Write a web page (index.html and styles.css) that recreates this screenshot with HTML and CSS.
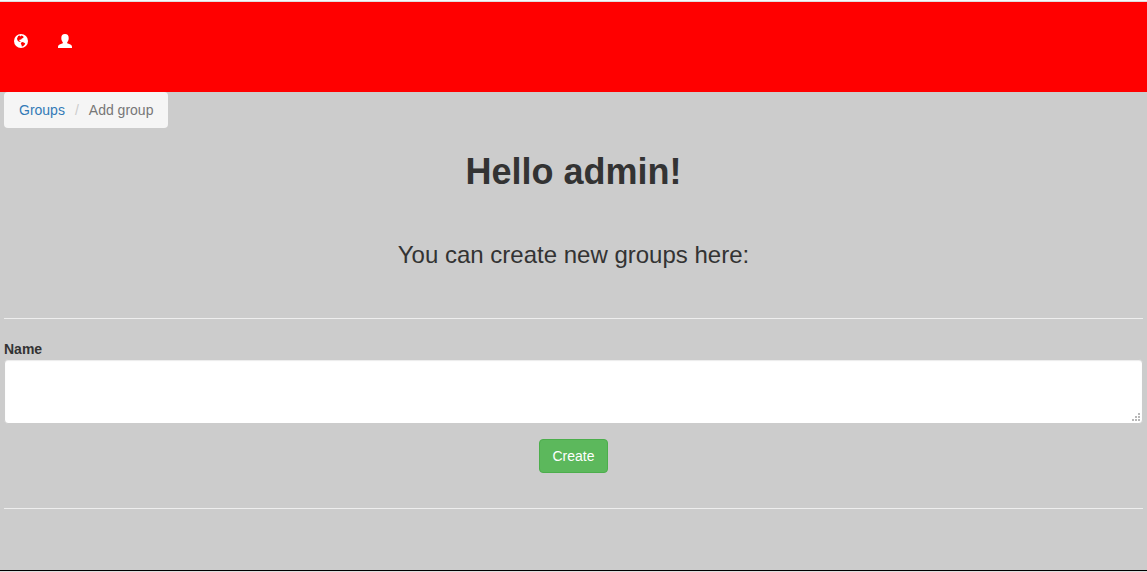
FILE: index.html
```html
<!DOCTYPE html>
<html lang="en">
<head>
<meta charset="utf-8">
<meta name="viewport" content="width=device-width, initial-scale=1">
<title>Add group</title>
<link rel="stylesheet" href="styles.css">
</head>
<body>
<header class="page-header">
  <nav class="toolbar" aria-label="Main">
    <a class="toolbar-link" href="#" aria-label="Groups">
      <svg class="icon" viewBox="0 0 14 14" aria-hidden="true">
        <circle cx="7" cy="7" r="7" fill="#fff"/>
        <path fill="#f00" d="M4.2 2 5.6 1.4 6.4 2.4 7.4 1.6 9.2 2.2 9.6 3.4 8.6 4.2 7.8 4.6 7 5.8 6 5.4 5.2 6.2 5.6 7 6.8 7.4 6.2 8 4.6 7.4 3.4 6.2 3 4.4ZM7.2 8.4 8.6 8 10.2 8.8 11.2 9.4 10.6 10.8 9 12.2 7.8 12.4 7.6 11 6.8 9.8Z"/>
      </svg>
    </a>
    <a class="toolbar-link" href="#" aria-label="Account">
      <svg class="icon" viewBox="0 0 14 14" aria-hidden="true">
        <path fill="#fff" d="M7 0C9.6 0 10.7 1.5 10.7 3.9 10.7 6 10 7.2 9.2 8.2V9.2L12.4 10.6C13.5 11.1 14 11.9 14 13V14H0V13C0 11.9.5 11.1 1.6 10.6L4.8 9.2V8.2C4 7.2 3.3 6 3.3 3.9 3.3 1.5 4.4 0 7 0Z"/>
      </svg>
    </a>
  </nav>
</header>
<main class="content">
  <nav aria-label="Breadcrumb">
    <ol class="breadcrumb">
      <li><a href="#">Groups</a></li>
      <li class="current" aria-current="page">Add group</li>
    </ol>
  </nav>
  <h1 class="title">Hello admin!</h1>
  <h3 class="subtitle">You can create new groups here:</h3>
  <hr class="rule">
  <form class="group-form">
    <label class="label" for="name">Name</label>
    <div class="field">
      <textarea class="textarea" id="name" name="name"></textarea>
      <svg class="grip" viewBox="0 0 8 8" shape-rendering="crispEdges" aria-hidden="true">
        <path fill="#b8b8b8" d="M6 0h2v2H6zM3 3h2v2H3zM6 3h2v2H6zM0 6h2v2H0zM3 6h2v2H3zM6 6h2v2H6z"/>
      </svg>
    </div>
    <button class="button" type="submit">Create</button>
  </form>
  <hr class="rule">
</main>
</body>
</html>
```
FILE: styles.css
```css
* {
  box-sizing: border-box;
}

html {
  min-height: 100%;
  display: flex;
  flex-direction: column;
}

body {
  flex: 1;
  display: flex;
  flex-direction: column;
  margin: 0;
  background: #ccc;
  color: #333;
  font: 14px/20px "Liberation Sans", Arial, sans-serif;
  border-top: 1px solid #fafafa;
  border-bottom: 1px solid #ddd;
}

.page-header {
  padding: 32px 14px 44px;
  border-top: 1px solid #ddd;
  background: #f00;
}

.toolbar {
  display: flex;
  gap: 30px;
}

.toolbar-link,
.icon {
  display: block;
  width: 14px;
  height: 14px;
}

.content {
  flex: 1;
  padding: 0 4px;
  border-bottom: 1px solid #000;
}

.breadcrumb {
  display: flex;
  width: fit-content;
  margin: 0;
  padding: 8px 15px;
  list-style: none;
  background: #f5f5f5;
  border-radius: 4px;
}

.breadcrumb a {
  color: #337ab7;
  text-decoration: none;
}

.current {
  color: #777;
}

.current::before {
  content: "/";
  padding: 0 10px;
  color: #ccc;
}

.title {
  margin: 24px 0 0;
  font-size: 36px;
  line-height: 40px;
  text-align: center;
}

.subtitle {
  margin: 50px 0 0;
  font-size: 24px;
  font-weight: 400;
  line-height: 26px;
  text-align: center;
}

.rule {
  margin: 50px 0 0;
  border: 0;
  border-top: 1px solid #eee;
}

.group-form {
  padding-top: 20px;
  margin-bottom: -15px;
}

.label {
  display: block;
  font-weight: 700;
}

.field {
  position: relative;
}

.textarea {
  display: block;
  width: 100%;
  height: 65px;
  padding: 6px 12px;
  border: 1px solid #ccc;
  border-radius: 4px;
  background: #fff;
  color: #555;
  font: inherit;
  box-shadow: inset 0 1px 1px rgba(0, 0, 0, 0.08);
  resize: none;
}

.grip {
  position: absolute;
  right: 3px;
  bottom: 3px;
  width: 8px;
  height: 8px;
  pointer-events: none;
}

.button {
  display: block;
  margin: 15px auto 0;
  padding: 6px 12px;
  border: 1px solid #4cae4c;
  border-radius: 4px;
  background: #5cb85c;
  color: #fff;
  font: inherit;
  cursor: pointer;
}
```
